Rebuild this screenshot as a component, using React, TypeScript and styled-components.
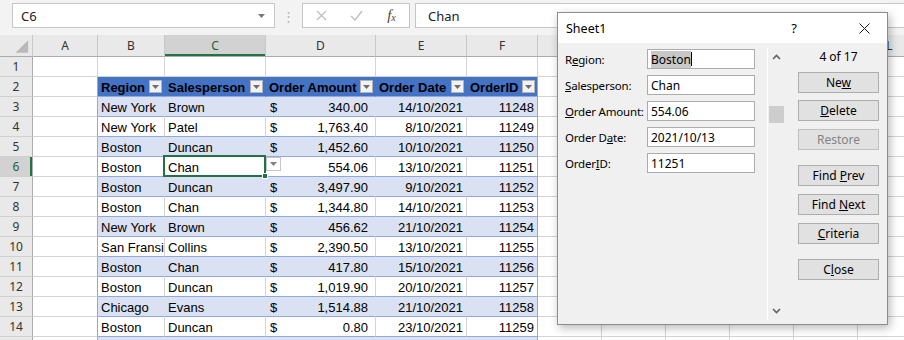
import styled, { createGlobalStyle } from 'styled-components';

const GlobalStyle = createGlobalStyle`
  html, body {
    margin: 0;
    padding: 0;
    background: #fff;
  }
  body {
    overflow: hidden;
    font-family: 'Liberation Sans', Arial, sans-serif;
  }
  * {
    box-sizing: border-box;
  }
`;

const COLOR = {
  GRID: '#d4d4d4',
  TABLE_LINE: '#8ea9db',
  BAND: '#d9e1f2',
  HEAD: '#4472c4',
  GREEN: '#217346',
  HEADER: '#e9e9e9',
  HEADER_ACTIVE: '#d2d2d2',
  BAR: '#f3f3f3',
  DIALOG: '#f0f0f0',
};

const UI_FONT = "'Noto Sans', 'Open Sans', sans-serif";
const COLS = '33px 65px 67px 101px 110px 91px 71px repeat(6, 64px)';
const LETTERS = ['A', 'B', 'C', 'D', 'E', 'F', 'G', 'H', 'I', 'J', 'K', 'L'];
const HEADINGS = ['Region', 'Salesperson', 'Order Amount', 'Order Date', 'OrderID'];

const ORDERS = [
  ['New York', 'Brown', '340.00', '14/10/2021', '11248'],
  ['New York', 'Patel', '1,763.40', '8/10/2021', '11249'],
  ['Boston', 'Duncan', '1,452.60', '10/10/2021', '11250'],
  ['Boston', 'Chan', '554.06', '13/10/2021', '11251'],
  ['Boston', 'Duncan', '3,497.90', '9/10/2021', '11252'],
  ['Boston', 'Chan', '1,344.80', '14/10/2021', '11253'],
  ['New York', 'Brown', '456.62', '21/10/2021', '11254'],
  ['San Fransisco', 'Collins', '2,390.50', '13/10/2021', '11255'],
  ['Boston', 'Chan', '417.80', '15/10/2021', '11256'],
  ['Boston', 'Duncan', '1,019.90', '20/10/2021', '11257'],
  ['Chicago', 'Evans', '1,514.88', '21/10/2021', '11258'],
  ['Boston', 'Duncan', '0.80', '23/10/2021', '11259'],
  ['', '', '', '', ''],
];

const FIELDS = [
  { label: <>R<u>e</u>gion:</>, value: 'Boston', selected: true },
  { label: <><u>S</u>alesperson:</>, value: 'Chan' },
  { label: <><u>O</u>rder Amount:</>, value: '554.06' },
  { label: <>Order D<u>a</u>te:</>, value: '2021/10/13' },
  { label: <>Order<u>I</u>D:</>, value: '11251' },
];

const BUTTONS = [
  { label: <>Ne<u>w</u></>, gap: 7 },
  { label: <><u>D</u>elete</>, gap: 7 },
  { label: <>Restore</>, gap: 8, disabled: true },
  { label: <>Find <u>P</u>rev</>, gap: 15 },
  { label: <>Find <u>N</u>ext</>, gap: 8 },
  { label: <><u>C</u>riteria</>, gap: 8 },
  { label: <>C<u>l</u>ose</>, gap: 15 },
];

const DownTriangle = ({ color = '#6e6e6e' }: { color?: string }) => (
  <svg width="7" height="4" viewBox="0 0 7 4">
    <path d="M0 0h7L3.5 4z" fill={color} />
  </svg>
);

const App = () => {
  return (
    <Page>
      <GlobalStyle />
      <FormulaBar>
        <NameBox>
          <span>C6</span>
          <DownTriangle color="#7a7a7a" />
        </NameBox>
        <BarDots>⋮</BarDots>
        <FxBox>
          <FxSlot>
            <svg width="11" height="11" viewBox="0 0 11 11">
              <path d="M1 1l9 9M10 1l-9 9" stroke="#bdbdbd" strokeWidth="1.2" />
            </svg>
          </FxSlot>
          <FxSlot>
            <svg width="13" height="11" viewBox="0 0 13 11">
              <path d="M1 6l4 4 7-9" stroke="#bdbdbd" strokeWidth="1.3" fill="none" />
            </svg>
          </FxSlot>
          <FxSlot>
            <FxMark>
              f<sub>x</sub>
            </FxMark>
          </FxSlot>
        </FxBox>
        <FormulaInput>Chan</FormulaInput>
      </FormulaBar>

      <Sheet>
        <SheetRow $height={22}>
          <ColHead>
            <svg width="33" height="21" viewBox="0 0 33 21">
              <path d="M29 5v13H16z" fill="#b9b9b9" />
            </svg>
          </ColHead>
          {LETTERS.map((letter) => (
            <ColHead key={letter} $active={letter === 'C'}>
              {letter}
            </ColHead>
          ))}
        </SheetRow>

        <SheetRow $height={20}>
          <RowHead>1</RowHead>
          {LETTERS.map((letter) => (
            <Cell key={letter} />
          ))}
        </SheetRow>

        <SheetRow $height={20}>
          <RowHead>2</RowHead>
          <Cell $right={COLOR.TABLE_LINE} />
          {HEADINGS.map((heading, i) => (
            <HeadCell key={heading} $last={i === HEADINGS.length - 1}>
              <span>{heading}</span>
              <FilterButton>
                <DownTriangle />
              </FilterButton>
            </HeadCell>
          ))}
          {LETTERS.slice(6).map((letter) => (
            <Cell key={letter} />
          ))}
        </SheetRow>

        {ORDERS.map((order, i) => {
          const rowNumber = i + 3;
          const band = i % 2 === 0;
          const bg = band ? COLOR.BAND : '#fff';
          const inner = band ? COLOR.BAND : COLOR.GRID;
          const active = rowNumber === 6;
          return (
            <SheetRow key={rowNumber} $height={20}>
              <RowHead $active={active}>{rowNumber}</RowHead>
              <Cell $right={COLOR.TABLE_LINE} />
              <Cell $bg={bg} $right={inner} $bottom={COLOR.TABLE_LINE}>
                {order[0]}
              </Cell>
              <Cell $bg={bg} $right={inner} $bottom={COLOR.TABLE_LINE} $selected={active}>
                {order[1]}
                {active && (
                  <>
                    <Selection>
                      <FillHandle />
                    </Selection>
                    <ListButton>
                      <DownTriangle color="#808080" />
                    </ListButton>
                  </>
                )}
              </Cell>
              <AmountCell $bg={bg} $right={inner} $bottom={COLOR.TABLE_LINE}>
                <span>{order[2] && !active ? '$' : ''}</span>
                <span>{order[2]}</span>
              </AmountCell>
              <Cell $bg={bg} $right={inner} $bottom={COLOR.TABLE_LINE} $align="right">
                {order[3]}
              </Cell>
              <Cell $bg={bg} $right={COLOR.TABLE_LINE} $bottom={COLOR.TABLE_LINE} $align="right">
                {order[4]}
              </Cell>
              {LETTERS.slice(6).map((letter) => (
                <Cell key={letter} />
              ))}
            </SheetRow>
          );
        })}
      </Sheet>

      <Dialog>
        <TitleBar>
          <span>Sheet1</span>
          <TitleIcons>
            <HelpMark>?</HelpMark>
            <svg width="11" height="11" viewBox="0 0 11 11">
              <path d="M0.5 0.5l10 10M10.5 0.5l-10 10" stroke="#1a1a1a" strokeWidth="1" />
            </svg>
          </TitleIcons>
        </TitleBar>
        <DialogBody>
          <FieldList>
            {FIELDS.map(({ label, value, selected }) => (
              <FieldRow key={value}>
                <FieldLabel>{label}</FieldLabel>
                <FieldInput>
                  {selected ? (
                    <>
                      <SelectedText>{value}</SelectedText>
                      <Caret />
                    </>
                  ) : (
                    value
                  )}
                </FieldInput>
              </FieldRow>
            ))}
          </FieldList>

          <RecordScroll>
            <svg width="9" height="6" viewBox="0 0 9 6">
              <path d="M1 5l3.5-3.5L8 5" stroke="#606060" strokeWidth="1.6" fill="none" />
            </svg>
            <ScrollThumb />
            <ScrollSpacer />
            <svg width="9" height="6" viewBox="0 0 9 6">
              <path d="M1 1l3.5 3.5L8 1" stroke="#606060" strokeWidth="1.6" fill="none" />
            </svg>
          </RecordScroll>

          <ButtonList>
            <RecordCount>4 of 17</RecordCount>
            {BUTTONS.map(({ label, gap, disabled }, i) => (
              <FormButton key={i} $gap={gap} disabled={disabled}>
                {label}
              </FormButton>
            ))}
          </ButtonList>
        </DialogBody>
      </Dialog>
    </Page>
  );
};

const Page = styled.div`
  position: relative;
  width: 904px;
  height: 340px;
  overflow: hidden;
`;

const FormulaBar = styled.div`
  display: flex;
  align-items: flex-start;
  height: 35px;
  padding: 3px 0 0 12px;
  background: ${COLOR.BAR};
  font-family: ${UI_FONT};
  font-size: 13px;
  color: #222;
`;

const BarBox = styled.div`
  display: flex;
  align-items: center;
  height: 25px;
  background: #fff;
  border: 1px solid #c6c6c6;
`;

const NameBox = styled(BarBox)`
  width: 263px;
  justify-content: space-between;
  padding: 0 9px 0 8px;
`;

const BarDots = styled.div`
  width: 27px;
  height: 25px;
  display: flex;
  align-items: center;
  justify-content: center;
  color: #b5b5b5;
  font-size: 13px;
`;

const FxBox = styled(BarBox)`
  width: 108px;
  padding-left: 1px;
`;

const FxSlot = styled.div`
  width: 36px;
  display: flex;
  justify-content: center;
  align-items: center;
`;

const FxMark = styled.span`
  font-family: 'Liberation Serif', serif;
  font-style: italic;
  font-size: 15px;
  color: #444;

  sub {
    font-size: 10px;
    vertical-align: -1px;
  }
`;

const FormulaInput = styled(BarBox)`
  flex: 1;
  margin-left: 5px;
  padding-left: 12px;
  border-right: none;
`;

const Sheet = styled.div`
  display: flex;
  flex-direction: column;
`;

const SheetRow = styled.div<{ $height: number }>`
  display: grid;
  grid-template-columns: ${COLS};
  height: ${({ $height }) => $height}px;
`;

const ColHead = styled.div<{ $active?: boolean }>`
  display: flex;
  align-items: center;
  justify-content: center;
  background: ${({ $active }) => ($active ? COLOR.HEADER_ACTIVE : COLOR.HEADER)};
  border-right: 1px solid #c8c8c8;
  border-bottom: 1px solid #ababab;
  box-shadow: ${({ $active }) => ($active ? `inset 0 -2px 0 ${COLOR.GREEN}` : 'none')};
  font-family: ${UI_FONT};
  font-size: 12px;
  color: ${({ $active }) => ($active ? '#1d5f3a' : '#333')};
  overflow: hidden;
`;

const RowHead = styled.div<{ $active?: boolean }>`
  display: flex;
  align-items: center;
  justify-content: center;
  background: ${({ $active }) => ($active ? COLOR.HEADER_ACTIVE : COLOR.HEADER)};
  border-right: 1px solid #ababab;
  border-bottom: 1px solid #d0d0d0;
  box-shadow: ${({ $active }) => ($active ? `inset -2px 0 0 ${COLOR.GREEN}` : 'none')};
  font-family: ${UI_FONT};
  font-size: 12px;
  color: ${({ $active }) => ($active ? '#1d5f3a' : '#333')};
`;

const Cell = styled.div<{
  $bg?: string;
  $right?: string;
  $bottom?: string;
  $align?: 'left' | 'right';
  $selected?: boolean;
}>`
  position: ${({ $selected }) => ($selected ? 'relative' : 'static')};
  display: flex;
  align-items: flex-end;
  justify-content: ${({ $align }) => ($align === 'right' ? 'flex-end' : 'flex-start')};
  padding: 0 3px 1px;
  background: ${({ $bg = '#fff' }) => $bg};
  border-right: 1px solid ${({ $right = COLOR.GRID }) => $right};
  border-bottom: 1px solid ${({ $bottom = COLOR.GRID }) => $bottom};
  font-size: 13px;
  line-height: 15px;
  color: #000;
  white-space: nowrap;
  overflow: ${({ $selected }) => ($selected ? 'visible' : 'hidden')};
`;

const AmountCell = styled(Cell)`
  justify-content: space-between;
  padding: 0 7px 1px 4px;
`;

const HeadCell = styled.div<{ $last?: boolean }>`
  display: flex;
  align-items: center;
  justify-content: space-between;
  padding: 0 2px 0 3px;
  background: ${COLOR.HEAD};
  border-right: 1px solid ${({ $last }) => ($last ? COLOR.TABLE_LINE : COLOR.HEAD)};
  border-bottom: 1px solid ${COLOR.TABLE_LINE};
  font-size: 13px;
  font-weight: bold;
  color: #000;
  white-space: nowrap;
  overflow: hidden;

  span {
    padding-top: 1px;
  }
`;

const FilterButton = styled.div`
  display: flex;
  align-items: center;
  justify-content: center;
  flex: none;
  width: 13px;
  height: 13px;
  background: #f2f2f2;
  border: 1px solid #b4b4b4;
`;

const Selection = styled.div`
  position: absolute;
  left: -2px;
  top: -2px;
  right: -1px;
  bottom: -1px;
  border: 2px solid ${COLOR.GREEN};
  pointer-events: none;
`;

const FillHandle = styled.div`
  position: absolute;
  right: -4px;
  bottom: -4px;
  width: 6px;
  height: 6px;
  background: ${COLOR.GREEN};
  border: 1px solid #fff;
`;

const ListButton = styled.div`
  position: absolute;
  left: calc(100% + 1px);
  top: 0;
  width: 15px;
  height: 14px;
  display: flex;
  align-items: center;
  justify-content: center;
  background: #fff;
  border: 1px solid #c6c6c6;
  z-index: 1;
`;

const Dialog = styled.div`
  position: absolute;
  left: 557px;
  top: 12px;
  width: 331px;
  height: 313px;
  display: flex;
  flex-direction: column;
  background: ${COLOR.DIALOG};
  border: 1px solid #8c8c8c;
  box-shadow: 2px 3px 9px rgba(0, 0, 0, 0.28);
  font-family: ${UI_FONT};
  font-size: 12px;
  color: #000;
  z-index: 5;
`;

const TitleBar = styled.div`
  display: flex;
  align-items: center;
  justify-content: space-between;
  height: 30px;
  padding: 0 17px 0 8px;
  background: #fff;
  font-size: 12.5px;
`;

const TitleIcons = styled.div`
  display: flex;
  align-items: center;
  gap: 62px;
`;

const HelpMark = styled.span`
  font-size: 13px;
`;

const DialogBody = styled.div`
  flex: 1;
  display: flex;
  padding-left: 7px;
`;

const FieldList = styled.div`
  display: flex;
  flex-direction: column;
  gap: 6px;
  padding-top: 6px;
`;

const FieldRow = styled.div`
  display: grid;
  grid-template-columns: 82px 108px;
  align-items: center;
  height: 20px;
`;

const FieldLabel = styled.span`
  font-size: 11.5px;
  letter-spacing: -0.2px;
  white-space: nowrap;
`;

const FieldInput = styled.div`
  display: flex;
  align-items: center;
  height: 20px;
  padding-left: 3px;
  background: #fff;
  border: 1px solid #acacac;
`;

const SelectedText = styled.span`
  background: #c8c8c8;
`;

const Caret = styled.span`
  width: 1px;
  height: 14px;
  background: #000;
`;

const RecordScroll = styled.div`
  display: flex;
  flex-direction: column;
  align-items: center;
  width: 17px;
  height: 272px;
  margin: 5px 0 0 12px;
  padding: 6px 0 6px 1px;
  border-left: 1px solid #fff;
`;

const ScrollThumb = styled.div`
  width: 15px;
  height: 17px;
  margin-top: 46px;
  background: #cdcdcd;
`;

const ScrollSpacer = styled.div`
  flex: 1;
`;

const ButtonList = styled.div`
  display: flex;
  flex-direction: column;
  width: 81px;
  margin-left: 14px;
  padding-top: 6px;
`;

const RecordCount = styled.div`
  height: 16px;
  line-height: 16px;
  text-align: center;
`;

const FormButton = styled.button<{ $gap: number }>`
  height: 21px;
  margin-top: ${({ $gap }) => $gap}px;
  padding: 0;
  background: #e1e1e1;
  border: 1px solid #adadad;
  font-family: ${UI_FONT};
  font-size: 12px;
  color: #000;

  &:disabled {
    color: #838383;
    border-color: #bfbfbf;
  }
`;

export default App;
